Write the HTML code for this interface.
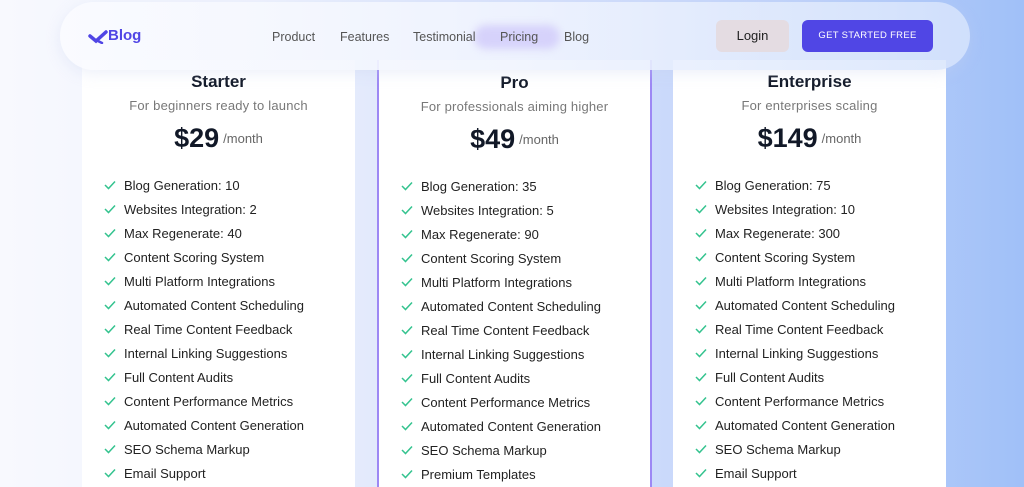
<!DOCTYPE html>
<html><head><meta charset="utf-8"><style>
*{margin:0;padding:0;box-sizing:border-box}
html,body{width:1024px;height:487px;overflow:hidden}
body{font-family:"Liberation Sans",sans-serif;background:linear-gradient(90deg,#f8f9fe 0%,#eef2fd 25%,#dfe7fc 40%,#cfdcfb 60%,#bcd0fa 80%,#a0c0f8 100%);position:relative}
.card{position:absolute;top:60px;width:273px;height:427px;background:#fff}
.card.pro{border-left:2px solid #9d88f4;border-right:2px solid #9d88f4}
.t{position:absolute;left:0;right:0;text-align:center;color:#111827}
.name{top:12px;font-size:17px;font-weight:bold}
.sub{top:38px;font-size:13px;color:#787878;letter-spacing:.2px}
.price{top:63px;font-size:27px;font-weight:bold}
.price span{font-size:13px;font-weight:normal;color:#666;margin-left:4px;vertical-align:4px}
ul{position:absolute;top:113px;left:22px;list-style:none}
li{height:24px;font-size:13px;color:#222;display:flex;align-items:center}
li svg{margin-right:8px}
.nav{position:absolute;left:60px;top:2px;width:910px;height:68px;border-radius:34px;background:linear-gradient(90deg,rgba(250,251,255,.95),rgba(240,244,254,.9) 50%,rgba(215,228,252,.85));box-shadow:0 4px 14px rgba(200,210,240,.3)}
.logo{position:absolute;left:88px;top:27px;font-weight:bold;font-size:15px;color:#5045e5}
.links a{position:absolute;top:30px;font-size:12.5px;color:#555;text-decoration:none}
.pill{position:absolute;left:474px;top:25px;width:86px;height:24px;border-radius:12px;background:#d6d2fb;filter:blur(4px)}
.login{position:absolute;left:716px;top:20px;width:73px;height:32px;border-radius:6px;background:#e4dce2;color:#222;font-size:13px;text-align:center;line-height:32px}
.cta{position:absolute;left:802px;top:20px;width:131px;height:32px;border-radius:6px;background:#5046e5;color:#fff;font-size:9.5px;text-align:center;line-height:32px;letter-spacing:.3px}
</style></head><body>
<div class="card" style="left:82px">
<div class="t name" style="top:12px">Starter</div>
<div class="t sub">For beginners ready to launch</div>
<div class="t price">$29<span>/month</span></div>
<ul>
<li><svg width="12" height="10" viewBox="0 0 12 10"><path d="M1 5l3.5 3.5L11 1.5" fill="none" stroke="#34c38f" stroke-width="1.5"/></svg>Blog Generation: 10</li>
<li><svg width="12" height="10" viewBox="0 0 12 10"><path d="M1 5l3.5 3.5L11 1.5" fill="none" stroke="#34c38f" stroke-width="1.5"/></svg>Websites Integration: 2</li>
<li><svg width="12" height="10" viewBox="0 0 12 10"><path d="M1 5l3.5 3.5L11 1.5" fill="none" stroke="#34c38f" stroke-width="1.5"/></svg>Max Regenerate: 40</li>
<li><svg width="12" height="10" viewBox="0 0 12 10"><path d="M1 5l3.5 3.5L11 1.5" fill="none" stroke="#34c38f" stroke-width="1.5"/></svg>Content Scoring System</li>
<li><svg width="12" height="10" viewBox="0 0 12 10"><path d="M1 5l3.5 3.5L11 1.5" fill="none" stroke="#34c38f" stroke-width="1.5"/></svg>Multi Platform Integrations</li>
<li><svg width="12" height="10" viewBox="0 0 12 10"><path d="M1 5l3.5 3.5L11 1.5" fill="none" stroke="#34c38f" stroke-width="1.5"/></svg>Automated Content Scheduling</li>
<li><svg width="12" height="10" viewBox="0 0 12 10"><path d="M1 5l3.5 3.5L11 1.5" fill="none" stroke="#34c38f" stroke-width="1.5"/></svg>Real Time Content Feedback</li>
<li><svg width="12" height="10" viewBox="0 0 12 10"><path d="M1 5l3.5 3.5L11 1.5" fill="none" stroke="#34c38f" stroke-width="1.5"/></svg>Internal Linking Suggestions</li>
<li><svg width="12" height="10" viewBox="0 0 12 10"><path d="M1 5l3.5 3.5L11 1.5" fill="none" stroke="#34c38f" stroke-width="1.5"/></svg>Full Content Audits</li>
<li><svg width="12" height="10" viewBox="0 0 12 10"><path d="M1 5l3.5 3.5L11 1.5" fill="none" stroke="#34c38f" stroke-width="1.5"/></svg>Content Performance Metrics</li>
<li><svg width="12" height="10" viewBox="0 0 12 10"><path d="M1 5l3.5 3.5L11 1.5" fill="none" stroke="#34c38f" stroke-width="1.5"/></svg>Automated Content Generation</li>
<li><svg width="12" height="10" viewBox="0 0 12 10"><path d="M1 5l3.5 3.5L11 1.5" fill="none" stroke="#34c38f" stroke-width="1.5"/></svg>SEO Schema Markup</li>
<li><svg width="12" height="10" viewBox="0 0 12 10"><path d="M1 5l3.5 3.5L11 1.5" fill="none" stroke="#34c38f" stroke-width="1.5"/></svg>Email Support</li>
</ul></div>
<div class="card pro" style="left:377px;width:275px">
<div class="t name" style="top:13px">Pro</div>
<div class="t sub" style="top:39px">For professionals aiming higher</div>
<div class="t price" style="top:64px">$49<span>/month</span></div>
<ul style="top:114px">
<li><svg width="12" height="10" viewBox="0 0 12 10"><path d="M1 5l3.5 3.5L11 1.5" fill="none" stroke="#34c38f" stroke-width="1.5"/></svg>Blog Generation: 35</li>
<li><svg width="12" height="10" viewBox="0 0 12 10"><path d="M1 5l3.5 3.5L11 1.5" fill="none" stroke="#34c38f" stroke-width="1.5"/></svg>Websites Integration: 5</li>
<li><svg width="12" height="10" viewBox="0 0 12 10"><path d="M1 5l3.5 3.5L11 1.5" fill="none" stroke="#34c38f" stroke-width="1.5"/></svg>Max Regenerate: 90</li>
<li><svg width="12" height="10" viewBox="0 0 12 10"><path d="M1 5l3.5 3.5L11 1.5" fill="none" stroke="#34c38f" stroke-width="1.5"/></svg>Content Scoring System</li>
<li><svg width="12" height="10" viewBox="0 0 12 10"><path d="M1 5l3.5 3.5L11 1.5" fill="none" stroke="#34c38f" stroke-width="1.5"/></svg>Multi Platform Integrations</li>
<li><svg width="12" height="10" viewBox="0 0 12 10"><path d="M1 5l3.5 3.5L11 1.5" fill="none" stroke="#34c38f" stroke-width="1.5"/></svg>Automated Content Scheduling</li>
<li><svg width="12" height="10" viewBox="0 0 12 10"><path d="M1 5l3.5 3.5L11 1.5" fill="none" stroke="#34c38f" stroke-width="1.5"/></svg>Real Time Content Feedback</li>
<li><svg width="12" height="10" viewBox="0 0 12 10"><path d="M1 5l3.5 3.5L11 1.5" fill="none" stroke="#34c38f" stroke-width="1.5"/></svg>Internal Linking Suggestions</li>
<li><svg width="12" height="10" viewBox="0 0 12 10"><path d="M1 5l3.5 3.5L11 1.5" fill="none" stroke="#34c38f" stroke-width="1.5"/></svg>Full Content Audits</li>
<li><svg width="12" height="10" viewBox="0 0 12 10"><path d="M1 5l3.5 3.5L11 1.5" fill="none" stroke="#34c38f" stroke-width="1.5"/></svg>Content Performance Metrics</li>
<li><svg width="12" height="10" viewBox="0 0 12 10"><path d="M1 5l3.5 3.5L11 1.5" fill="none" stroke="#34c38f" stroke-width="1.5"/></svg>Automated Content Generation</li>
<li><svg width="12" height="10" viewBox="0 0 12 10"><path d="M1 5l3.5 3.5L11 1.5" fill="none" stroke="#34c38f" stroke-width="1.5"/></svg>SEO Schema Markup</li>
<li><svg width="12" height="10" viewBox="0 0 12 10"><path d="M1 5l3.5 3.5L11 1.5" fill="none" stroke="#34c38f" stroke-width="1.5"/></svg>Premium Templates</li>
</ul></div>
<div class="card" style="left:673px">
<div class="t name">Enterprise</div>
<div class="t sub">For enterprises scaling</div>
<div class="t price">$149<span>/month</span></div>
<ul>
<li><svg width="12" height="10" viewBox="0 0 12 10"><path d="M1 5l3.5 3.5L11 1.5" fill="none" stroke="#34c38f" stroke-width="1.5"/></svg>Blog Generation: 75</li>
<li><svg width="12" height="10" viewBox="0 0 12 10"><path d="M1 5l3.5 3.5L11 1.5" fill="none" stroke="#34c38f" stroke-width="1.5"/></svg>Websites Integration: 10</li>
<li><svg width="12" height="10" viewBox="0 0 12 10"><path d="M1 5l3.5 3.5L11 1.5" fill="none" stroke="#34c38f" stroke-width="1.5"/></svg>Max Regenerate: 300</li>
<li><svg width="12" height="10" viewBox="0 0 12 10"><path d="M1 5l3.5 3.5L11 1.5" fill="none" stroke="#34c38f" stroke-width="1.5"/></svg>Content Scoring System</li>
<li><svg width="12" height="10" viewBox="0 0 12 10"><path d="M1 5l3.5 3.5L11 1.5" fill="none" stroke="#34c38f" stroke-width="1.5"/></svg>Multi Platform Integrations</li>
<li><svg width="12" height="10" viewBox="0 0 12 10"><path d="M1 5l3.5 3.5L11 1.5" fill="none" stroke="#34c38f" stroke-width="1.5"/></svg>Automated Content Scheduling</li>
<li><svg width="12" height="10" viewBox="0 0 12 10"><path d="M1 5l3.5 3.5L11 1.5" fill="none" stroke="#34c38f" stroke-width="1.5"/></svg>Real Time Content Feedback</li>
<li><svg width="12" height="10" viewBox="0 0 12 10"><path d="M1 5l3.5 3.5L11 1.5" fill="none" stroke="#34c38f" stroke-width="1.5"/></svg>Internal Linking Suggestions</li>
<li><svg width="12" height="10" viewBox="0 0 12 10"><path d="M1 5l3.5 3.5L11 1.5" fill="none" stroke="#34c38f" stroke-width="1.5"/></svg>Full Content Audits</li>
<li><svg width="12" height="10" viewBox="0 0 12 10"><path d="M1 5l3.5 3.5L11 1.5" fill="none" stroke="#34c38f" stroke-width="1.5"/></svg>Content Performance Metrics</li>
<li><svg width="12" height="10" viewBox="0 0 12 10"><path d="M1 5l3.5 3.5L11 1.5" fill="none" stroke="#34c38f" stroke-width="1.5"/></svg>Automated Content Generation</li>
<li><svg width="12" height="10" viewBox="0 0 12 10"><path d="M1 5l3.5 3.5L11 1.5" fill="none" stroke="#34c38f" stroke-width="1.5"/></svg>SEO Schema Markup</li>
<li><svg width="12" height="10" viewBox="0 0 12 10"><path d="M1 5l3.5 3.5L11 1.5" fill="none" stroke="#34c38f" stroke-width="1.5"/></svg>Email Support</li>
</ul></div>
<div class="nav"></div>
<div class="pill"></div>
<svg style="position:absolute;left:88px;top:30px" width="20" height="14" viewBox="0 0 20 14"><path d="M2 6l6 5L18 2" fill="none" stroke="#5045e5" stroke-width="3.5" stroke-linecap="round"/><path d="M10 11l4 2" stroke="#5045e5" stroke-width="2.5" stroke-linecap="round"/></svg>
<div class="logo" style="left:108px">Blog</div>
<div class="links"><a style="left:272px">Product</a><a style="left:340px">Features</a><a style="left:413px">Testimonial</a><a style="left:500px">Pricing</a><a style="left:564px">Blog</a></div>
<div class="login">Login</div>
<div class="cta">GET STARTED FREE</div>
</body></html>
